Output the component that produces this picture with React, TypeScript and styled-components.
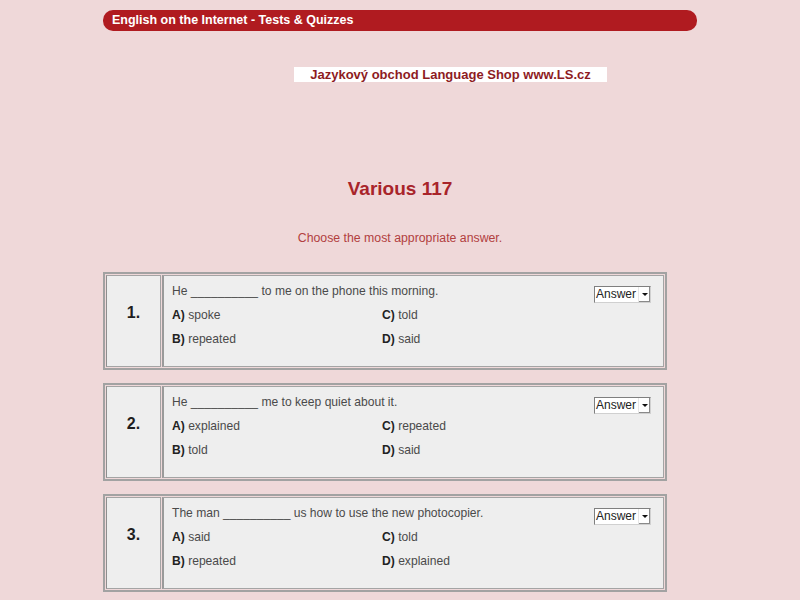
import React from 'react';
import styled, { createGlobalStyle } from 'styled-components';

const GlobalStyle = createGlobalStyle`
  html, body {
    margin: 0;
    padding: 0;
    overflow: hidden;
    background-color: #efd8d9;
  }
  body {
    font-family: 'Liberation Sans', Arial, sans-serif;
  }
`;

const Page = styled.div`
  width: 594px;
  margin: 10px auto 0;
`;

const HeaderBar = styled.div`
  height: 21px;
  line-height: 21px;
  background-color: #b01b20;
  border-radius: 10px;
  color: #ffffff;
  font-size: 12.5px;
  font-weight: bold;
  padding-left: 9px;
`;

const Banner = styled.div`
  width: 313px;
  height: 15px;
  line-height: 15px;
  margin: 36px 0 0 191px;
  background-color: #ffffff;
  color: #8e1c1f;
  font-size: 13px;
  font-weight: bold;
  text-align: center;
`;

const Title = styled.h1`
  margin: 96px 0 0;
  font-size: 19px;
  line-height: 22px;
  font-weight: bold;
  color: #a8242a;
  text-align: center;
`;

const Instruction = styled.p`
  margin: 31px 0 0;
  font-size: 12.3px;
  line-height: 14px;
  color: #b2403f;
  text-align: center;
`;

const QuizList = styled.div`
  margin-top: 27px;
  display: flex;
  flex-direction: column;
  gap: 13px;
`;

const QuizTable = styled.table`
  width: 564px;
  border: 2px solid #a2a2a2;
  border-spacing: 1px;
  background-color: #efd8d9;
`;

const NumberCell = styled.td`
  width: 55px;
  height: 92px;
  padding: 0 0 16px;
  box-sizing: border-box;
  border: 1px solid #a4a4a4;
  border-left-color: #8e8e8e;
  background-color: #eeeeee;
  text-align: center;
  vertical-align: middle;
  font-size: 16px;
  font-weight: bold;
  color: #1e1e1e;
`;

const ContentCell = styled.td`
  height: 92px;
  padding: 8px 12px 0 8px;
  box-sizing: border-box;
  border: 1px solid #a4a4a4;
  border-left: 2px solid #9a9a9a;
  background-color: #eeeeee;
  vertical-align: top;
  font-size: 12.1px;
  color: #4a4a4a;
`;

const QuestionRow = styled.div`
  display: flex;
  justify-content: space-between;
  align-items: flex-start;
  height: 24px;
  line-height: 14px;
`;

const Options = styled.div`
  display: grid;
  grid-template-columns: 210px 1fr;
  row-gap: 10px;
  line-height: 14px;
`;

const Option = styled.div`
  color: #4a4a4a;
`;

const Letter = styled.b`
  color: #222222;
`;

const FakeSelect = styled.div`
  display: flex;
  align-items: stretch;
  height: 17px;
  width: 57px;
  margin-top: 2px;
  box-sizing: border-box;
  border: 1px solid #7f7f7f;
  border-right-color: #d0d0d0;
  border-bottom-color: #d0d0d0;
  background-color: #ffffff;
  font-size: 12px;
  color: #222222;
`;

const SelectText = styled.span`
  flex: 1;
  line-height: 15px;
  padding-left: 1px;
`;

const SelectArrow = styled.span`
  width: 11px;
  border-left: 1px solid #e6e6e6;
  box-shadow: inset -1px -1px 0 #8a8a8a;
  display: flex;
  align-items: center;
  justify-content: center;
  &::after {
    content: '';
    border-left: 3px solid transparent;
    border-right: 3px solid transparent;
    border-top: 3px solid #111111;
  }
`;

interface Question {
  stem: [string, string];
  a: string;
  b: string;
  c: string;
  d: string;
}

const questions: Question[] = [
  { stem: ['He', 'to me on the phone this morning.'], a: 'spoke', b: 'repeated', c: 'told', d: 'said' },
  { stem: ['He', 'me to keep quiet about it.'], a: 'explained', b: 'told', c: 'repeated', d: 'said' },
  { stem: ['The man', 'us how to use the new photocopier.'], a: 'said', b: 'repeated', c: 'told', d: 'explained' },
];

const App: React.FC = () => {
  return (
    <>
      <GlobalStyle />
      <Page>
        <HeaderBar>English on the Internet - Tests &amp; Quizzes</HeaderBar>
        <Banner>Jazykový obchod Language Shop www.LS.cz</Banner>
        <Title>Various 117</Title>
        <Instruction>Choose the most appropriate answer.</Instruction>
        <QuizList>
          {questions.map((q, i) => (
            <QuizTable key={i}>
              <tbody>
                <tr>
                  <NumberCell>{i + 1}.</NumberCell>
                  <ContentCell>
                    <QuestionRow>
                      <span>
                        {q.stem[0]} __________ {q.stem[1]}
                      </span>
                      <FakeSelect>
                        <SelectText>Answer</SelectText>
                        <SelectArrow />
                      </FakeSelect>
                    </QuestionRow>
                    <Options>
                      <Option><Letter>A)</Letter> {q.a}</Option>
                      <Option><Letter>C)</Letter> {q.c}</Option>
                      <Option><Letter>B)</Letter> {q.b}</Option>
                      <Option><Letter>D)</Letter> {q.d}</Option>
                    </Options>
                  </ContentCell>
                </tr>
              </tbody>
            </QuizTable>
          ))}
        </QuizList>
      </Page>
    </>
  );
};

export default App;
